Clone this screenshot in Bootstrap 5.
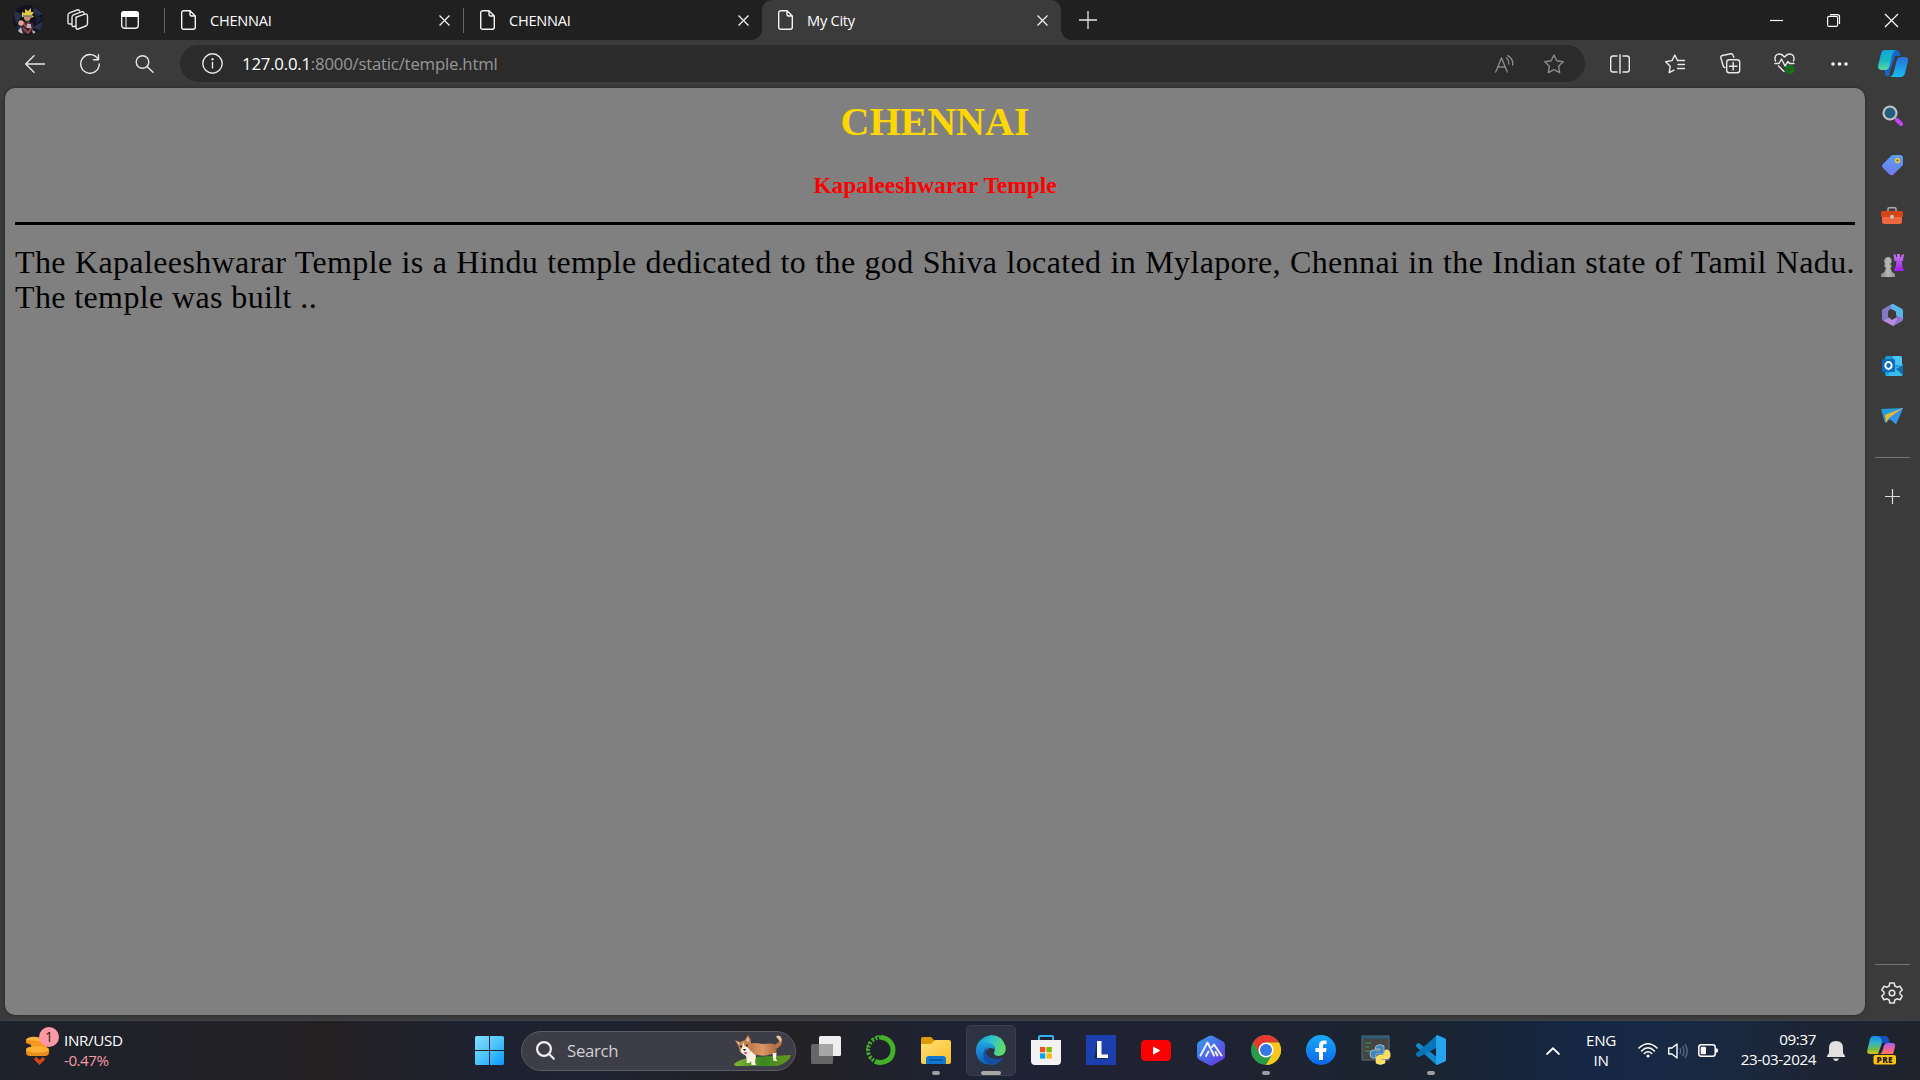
<!DOCTYPE html>
<html lang="en">
<head>
<meta charset="utf-8">
<title>My City</title>
<link rel="stylesheet" href="https://cdn.jsdelivr.net/npm/bootstrap@5.3.0/dist/css/bootstrap.min.css">
<style>
body{width:1920px;height:1080px;overflow:hidden;background:#3b3b3b;color:#fff;font-family:"Open Sans","Noto Sans",sans-serif;font-size:15px;line-height:20px}
svg{display:block;flex:none;overflow:visible}
.ln{fill:none;stroke:#e8e8e8;stroke-width:1.4;stroke-linecap:round;stroke-linejoin:round}
.cell{display:flex;align-items:center;justify-content:center;flex:none}
.tabstrip{height:40px;background:#202020}
.w44{width:44px}.w55{width:55px}.w56{width:56px}.w60{width:60px}.w57{width:57.5px}
.vsep{width:1px;height:25px;background:#666;margin-left:4px}
.tabitem{width:298px;height:40px;padding:0 13px 0 16px;position:relative}
.tabitem span{font-size:14.6px;letter-spacing:-.25px;margin-left:14px}
.tabitem.active{width:299px;background:#3b3b3b;border-radius:10px 10px 0 0}
.tabitem.active::before,.tabitem.active::after{content:"";position:absolute;bottom:0;width:10px;height:10px}
.tabitem.active::before{left:-10px;background:radial-gradient(circle at 0 0,transparent 9.5px,#3b3b3b 10px)}
.tabitem.active::after{right:-10px;background:radial-gradient(circle at 100% 0,transparent 9.5px,#3b3b3b 10px)}
.toolbar{height:48px;padding-left:7px}
.address{width:1405px;height:37px;background:#2b2b2b;border-radius:19px;margin:0 7px 1px 8px;padding-left:22px;padding-right:6px}
.url{font-size:16.8px;margin-left:19px;color:#979797;letter-spacing:-.22px}
.url b{font-weight:400;color:#fff}
.bar-icons{margin-bottom:1px}
.page-view{width:1860px;height:927px;margin-left:5px;background:#808080;border-radius:10px;padding:11px 10px;color:#000;box-shadow:0 0 3px #222}
.page-view h1{font:700 40px/46px "Liberation Serif",serif;color:gold;text-align:center;margin:0 0 26px}
.page-view h3{font:700 23.4px/28px "Liberation Serif",serif;color:red;text-align:center;margin:0}
.page-view hr{height:3px;background:#000;border:0;opacity:1;margin:23px 0 20px}
.page-view p{font:400 32px/35px "Liberation Serif",serif;text-align:justify;letter-spacing:.38px;margin:0}
.rail{width:54px;height:932px;padding-top:2px}
.rail .cell{width:54px;height:50.1px}
.rail .rule{width:35px;height:1px;background:#737373;flex:none}
.taskbar{height:60px;background:linear-gradient(90deg,#1e222c 0,#222124 14%,#232022 17%,#1e2230 25%,#1f2230 32%,#232123 41%,#1d2235 51%,#202231 60%,#1b2430 74%,#152744 82%,#182944 88%,#1d2433 95%,#20232c);border-top:1px solid #3d424a}
.widget{width:475px;padding-left:26px}
.widget .small-pink{color:#f29aa4;letter-spacing:-.5px}
.widget .txt{font-size:15.2px;letter-spacing:-.35px;margin-left:15px;margin-bottom:2px}
.pos-icon{position:relative;width:23px;height:32px}
.notif{position:absolute;left:13px;top:-8px;width:20px;height:20px;border-radius:50%;background:#ff98a4;color:#222;text-align:center;font-size:14px}
.searchbox{width:275px;height:40px;border:1px solid #5b5b64;border-radius:20px;background:#3d3d47;margin:0 2.5px 0 17px;padding-left:14px;padding-right:4px}
.searchbox span{font-size:16.8px;color:#d0d0d2;letter-spacing:-.3px;margin-left:12px}
.app{width:55px;height:59px;position:relative}
.app.run::after{content:"";position:absolute;bottom:5px;width:8px;height:4px;border-radius:2px;background:#9b9da3}
.app.open::before{content:"";position:absolute;left:2.5px;top:4px;width:50px;height:51px;border-radius:5px;background:#2e3344;border:1px solid #3b4050}
.app.open::after{width:20px;background:#aaa8a6}
.app svg{position:relative;margin-bottom:1px}
.tray{font-size:15.2px;letter-spacing:-.35px}
.clock{width:95px;text-align:right;font-size:15.2px;letter-spacing:-.4px;margin:0 0 3px -11px}
</style>
<script src="https://cdn.jsdelivr.net/npm/bootstrap@5.3.0/dist/js/bootstrap.bundle.min.js"></script>
</head>
<body class="d-flex flex-column">
<svg width="0" height="0" class="position-absolute">
<defs>
<symbol id="file" viewBox="0 0 15 20"><path d="M3 .7H9L14.3 6V17.3Q14.3 19.3 12.3 19.3H2.7Q.7 19.3.7 17.3V2.7Q.7.7 3 .7ZM9 .7V4.5Q9 6 10.5 6H14.3" fill="none" stroke="#f4f4f4" stroke-width="1.4"/></symbol>
<symbol id="x" viewBox="0 0 11 11"><path d="M.5.5 10.5 10.5M10.5.5.5 10.5" stroke="#f2f2f2" stroke-width="1.3"/></symbol>
<linearGradient id="gTeal" x2="0" y2="1"><stop stop-color="#10a7d8"/><stop offset=".5" stop-color="#15b5c3"/><stop offset="1" stop-color="#61d7a0"/></linearGradient>
<linearGradient id="gBlue" x2="0" y2="1"><stop stop-color="#2772dd"/><stop offset="1" stop-color="#13bdf3"/></linearGradient>
<linearGradient id="gWin" x2="1" y2="1"><stop stop-color="#83dcff"/><stop offset=".5" stop-color="#4cc6fd"/><stop offset="1" stop-color="#0a97fb"/></linearGradient>
<linearGradient id="gTag" x2="0" y2="1"><stop stop-color="#559ef5"/><stop offset="1" stop-color="#7278ed"/></linearGradient>
<linearGradient id="gPurple" x2="0" y2="1"><stop stop-color="#c07be2"/><stop offset="1" stop-color="#a31cff"/></linearGradient>
<linearGradient id="gGray" x2="1"><stop stop-color="#858585"/><stop offset=".5" stop-color="#b8b8b8"/><stop offset="1" stop-color="#929292"/></linearGradient>
<linearGradient id="gFold" x2="1" y2="1"><stop stop-color="#ffe07b"/><stop offset="1" stop-color="#f9bd26"/></linearGradient>
<linearGradient id="gEdge" x1="0" y1=".3" x2="1" y2=".5"><stop stop-color="#1799d6"/><stop offset=".5" stop-color="#31c2cd"/><stop offset="1" stop-color="#62df5c"/></linearGradient>
<linearGradient id="gEdge2" x2="0" y2="1"><stop stop-color="#21a3df"/><stop offset="1" stop-color="#0a61be"/></linearGradient>
<linearGradient id="gHex" x2="1" y2="1"><stop stop-color="#32a1ed"/><stop offset=".5" stop-color="#4c6ae8"/><stop offset="1" stop-color="#6c2be5"/></linearGradient>
<linearGradient id="gFb" x2="0" y2="1"><stop stop-color="#18a9fb"/><stop offset="1" stop-color="#0967e8"/></linearGradient>
<linearGradient id="gRain" x2="0" y2="1"><stop stop-color="#168bee"/><stop offset=".4" stop-color="#30b3c2"/><stop offset=".75" stop-color="#75bb49"/><stop offset="1" stop-color="#dfc20a"/></linearGradient>
<linearGradient id="gPink" x2="0" y2="1"><stop stop-color="#9e61ec"/><stop offset=".5" stop-color="#ec5fa8"/><stop offset="1" stop-color="#fc7a50"/></linearGradient>
<linearGradient id="gGrass" x2="1"><stop stop-color="#7eb935"/><stop offset=".5" stop-color="#3b861f"/><stop offset="1" stop-color="#669820"/></linearGradient>
<linearGradient id="gFur" x2="1"><stop stop-color="#b87544"/><stop offset=".5" stop-color="#db9968"/><stop offset="1" stop-color="#aa683c"/></linearGradient>
<clipPath id="round"><circle cx="15" cy="15" r="15"/></clipPath>
</defs>
</svg>

<header class="tabstrip d-flex align-items-center flex-shrink-0">
  <div class="cell w56"><svg width="30" height="30"><g clip-path="url(#round)"><rect width="30" height="30" fill="#10131d"/><path d="M0 5 10 10 3 18ZM20 1 30 9 22 12ZM20 22 30 16V27Z" fill="#29324c"/><path d="M2 22 10 15 8 30H3ZM23 9 29 14 23 19Z" fill="#1b2237"/><path d="M9 12 9 7 12 8 12 4 15 6 18 3 18 7 21 7 19 10 21 12 17 13Z" fill="#e2c83c"/><path d="M11 11H18L17 15 14 17 11 14Z" fill="#c68e6a"/><path d="M10 11H19" stroke="#6f7888" stroke-width="1.6"/><path d="M9 17 14 16 20 18 21 23 17 29 9 28 6 22Z" fill="#32293b"/><path d="M10 17 13 22 16 17M10 23 15 28 19 22" fill="none" stroke="#b4493b" stroke-width="1.5"/><circle cx="8" cy="18" r="2.7" fill="#dda98b"/><path d="M8 22 10 29 4 27ZM14 19H18V23H14ZM19 25 23 27 20 29Z" fill="#b5b7c4"/></g></svg></div>
  <div class="cell w44"><svg width="22" height="22" class="ln"><path d="M9 8.2 18 5.2Q20.5 4.5 20.5 7V14.5Q20.5 16 19 17L11 20Q9 20.8 9 18.5V10Q9 8.8 10 8M9 17 7 17.5Q5 18 5 16V8Q5 6.5 6.5 5.8L15 2.7Q16.5 2.2 17 4.2M5 14.7 3 15Q1 15.4 1 13.3V6Q1 4.5 2.5 3.8L10 1Q12 .3 12.6 2"/></svg></div>
  <div class="cell w60"><svg width="18" height="18"><rect x=".7" y=".7" width="16.6" height="16.6" rx="3" fill="none" stroke="#eee" stroke-width="1.4"/><path d="M0 6V3Q0 0 3 0H15Q18 0 18 3V6Z" fill="#fff"/><path d="M5 6V17" stroke="#ddd" stroke-width="1.2"/></svg></div>
  <div class="vsep"></div>
  <div class="tabitem d-flex align-items-center"><svg width="15" height="20"><use href="#file"/></svg><span>CHENNAI</span><svg class="ms-auto" width="11" height="11"><use href="#x"/></svg></div>
  <div class="vsep ms-0"></div>
  <div class="tabitem d-flex align-items-center"><svg width="15" height="20"><use href="#file"/></svg><span>CHENNAI</span><svg class="ms-auto" width="11" height="11"><use href="#x"/></svg></div>
  <div class="tabitem active d-flex align-items-center"><svg width="15" height="20"><use href="#file"/></svg><span>My City</span><svg class="ms-auto" width="11" height="11"><use href="#x"/></svg></div>
  <div class="cell" style="width:54px"><svg width="18" height="18"><path d="M9 0V18M0 9H18" stroke="#e5e5e5" stroke-width="1.3"/></svg></div>
  <div class="ms-auto d-flex">
    <div class="cell w57"><svg width="13" height="13"><path d="M0 6.5H13" stroke="#fff" stroke-width="1.2"/></svg></div>
    <div class="cell w57"><svg width="13" height="13" fill="none" stroke="#fff" stroke-width="1.2"><rect x=".6" y="2.4" width="10" height="10" rx="1.5"/><path d="M3 .6H10.5Q12.5.6 12.5 2.7V10"/></svg></div>
    <div class="cell w57"><svg width="13" height="13"><path d="M0 0 13 13M13 0 0 13" stroke="#fff" stroke-width="1.2"/></svg></div>
  </div>
</header>

<nav class="toolbar d-flex align-items-center flex-shrink-0">
  <div class="cell w55 bar-icons"><svg width="20" height="18" class="ln"><path d="M19.5 9H.7M9 .7.7 9 9 17.3"/></svg></div>
  <div class="cell w55 bar-icons"><svg width="20" height="20" class="ln"><path d="M18.2 5.5A9.3 9.3 0 1 0 19.3 10M18.5.8V5.7H13.5"/></svg></div>
  <div class="cell w55 bar-icons"><svg width="19" height="18" class="ln"><circle cx="7.5" cy="7" r="6.3"/><path d="M12 11.5 18 17.3"/></svg></div>
  <div class="address d-flex align-items-center">
    <svg width="21" height="21" class="ln"><circle cx="10.5" cy="10.5" r="9.7"/><path d="M10.5 9.5V15"/><circle cx="10.5" cy="6.3" r=".5" fill="#fff"/></svg>
    <span class="url"><b>127.0.0.1</b>:8000/static/temple.html</span>
    <div class="ms-auto d-flex opacity-50">
      <div class="cell" style="width:50px"><svg width="19" height="18" class="ln"><path d="M.7 17 6.5 3 12.3 17M2.8 12H10.2M11.5 3Q14 5 13.8 9M12.5.7Q18.4 3.5 17.7 10"/></svg></div>
      <div class="cell" style="width:50px"><svg width="20" height="20" class="ln"><path d="M10 1 12.8 6.8 19.2 7.7 14.6 12.2 15.7 18.7 10 15.6 4.3 18.7 5.4 12.2.8 7.7 7.2 6.8Z"/></svg></div>
    </div>
  </div>
  <div class="cell w55 bar-icons"><svg width="20" height="20" class="ln"><path d="M7 2H3Q.7 2 .7 4.3V15.7Q.7 18 3 18H7M13 2H17Q19.3 2 19.3 4.3V15.7Q19.3 18 17 18H13M10 .7V19.3"/></svg></div>
  <div class="cell w55 bar-icons"><svg width="20" height="20" class="ln"><path d="M12.5 6.5 9.8 1 7 6.6.7 7.7 5.2 12.2 4.2 18.7 9 16.2M13 6.5H19.5M13 10.5H19.5M12.5 14.5H19.5"/></svg></div>
  <div class="cell w55 bar-icons"><svg width="20" height="21" class="ln"><rect x="6.7" y="6.7" width="13" height="13" rx="2.5"/><path d="M13.2 9.5V17M9.5 13.2H17M13.8 4.3 13 2.2Q12.5.4 10.7.8L2.4 2.5Q.3 3 .9 5L3.2 13Q3.6 14.6 5 14.5"/></svg></div>
  <div class="cell w55 bar-icons"><svg width="21" height="21" class="ln"><path d="M1.5 8Q-.2 3.2 3.4 1.4 7.2-.3 10.5 4 13.8-.3 17.6 1.4 21.2 3.2 19.5 8M1 10.5H5L7.5 6 11 13 14 8.5 15.5 10.5H20M4.5 13 10 18.5"/><circle cx="15.8" cy="16.5" r="4.6" fill="#0e7a14" stroke="none"/><path d="M13.7 16.6 15.2 18 18 15" stroke="#33502e"/></svg></div>
  <div class="cell w55 bar-icons"><svg width="17" height="4" fill="#fff"><circle cx="2" cy="2" r="1.8"/><circle cx="8.5" cy="2" r="1.8"/><circle cx="15" cy="2" r="1.8"/></svg></div>
  <div class="cell bar-icons" style="width:51px"><svg width="30" height="27"><path d="M7 0H18Q21.5 0 22.7 6H17L11.5 23Q12.5 27 8 26 7 25 6.5 20H3Q0 20 .3 16L3 4Q4 0 7 0Z" fill="#1465cc"/><path d="M7 0H18Q15 1 14 6L11.5 16Q10.5 20 7 20H3Q-.5 19 .3 15L3 4Q4 0 7 0Z" fill="url(#gTeal)"/><path d="M23 7H27Q31 7 29.8 12L27 23Q26 27 22.5 27H12Q15 26 16 21L18.5 11Q19.5 7 23 7Z" fill="url(#gBlue)"/></svg></div>
</nav>

<div class="d-flex flex-shrink-0" style="height:932px">
  <main class="page-view flex-shrink-0">
    <h1>CHENNAI</h1>
    <h3>Kapaleeshwarar Temple</h3>
    <hr>
    <p>The Kapaleeshwarar Temple is a Hindu temple dedicated to the god Shiva located in Mylapore, Chennai in the Indian state of Tamil Nadu. The temple was built ..</p>
  </main>
  <aside class="rail d-flex flex-column align-items-center">
    <div class="cell"><svg width="21" height="21"><path d="M13 13 15 15" stroke="#888" stroke-width="2"/><circle cx="8" cy="8" r="6.5" fill="#205d7e" stroke="#c1c1c1" stroke-width="2.2"/><path d="M15 15 19 19" stroke="#c444f4" stroke-width="4" stroke-linecap="round"/></svg></div>
    <div class="cell"><svg width="21" height="21"><path d="M10 0H18Q21 0 21 3V10L11 20Q9 21 7 19L1 13Q-1 11 1 9Z" fill="url(#gTag)"/><circle cx="15.5" cy="5.5" r="1.9" fill="#4a5579" stroke="#f0cd24" stroke-width="1.6"/></svg></div>
    <div class="cell"><svg width="22" height="17"><path d="M7 5V2Q7 .8 8 .8H14Q15 .8 15 2V5" fill="none" stroke="#aaa" stroke-width="1.6"/><path d="M1 8H21V15Q21 17 19 17H3Q1 17 1 15Z" fill="#ed6740"/><path d="M1 4H21Q22 4 22 6V10H0V6Q0 4 1 4Z" fill="#d54617"/><circle cx="11" cy="9.7" r="2" fill="#c6c6c6"/></svg></div>
    <div class="cell"><svg width="23" height="23"><path d="M12.5 0 15 1V3H16V0H19V3H20L20.5 1 23 0 22 7H20.7L21.5 14 23 16V17H13V16L14.7 13 15.5 7H13.5Z" fill="url(#gPurple)"/><path d="M4 10Q2 6 4.5 4 7.5 2 10 4.5 12 8 9 10L11 12 9.5 14 11 18 14 20V23H0V20L3.5 18 5 14 3 12Z" fill="url(#gGray)"/></svg></div>
    <div class="cell"><svg width="21" height="22"><path d="M9 .5 11 0 20 5 21 7V15L14 11V7.5L9 4.5 5 7V14L1 16.5 0 15V6Z" fill="#7fa0e0"/><path d="M11 0 20 5 21 7V15L14 11V7.5L7 3.5Z" fill="#55b6e8"/><path d="M9 .5 0 6V15L1 16.5 6 14V7L9 4.5Z" fill="#8479c7"/><path d="M1 16.5 7 13.5 10 16 15 13V11L21 15 20 17 11 22Z" fill="#b98bd9"/><path d="M14 11 21 15 20 17 12 21 15 15Z" fill="#8d74cf"/></svg></div>
    <div class="cell"><svg width="21" height="20"><rect x="3" width="17" height="20" rx="2" fill="#149bd8"/><path d="M11 0H18Q20 0 20 2V9H11Z" fill="#49c4f4"/><path d="M12 12 21 8V18Q21 20 18 20H4Z" fill="#36bceb"/><path d="M14 13 21 9V19Z" fill="#116eae"/><rect y="3" width="13" height="13" rx="1.5" fill="#086bc0"/><ellipse cx="6.5" cy="9.5" rx="3.2" ry="3.4" fill="none" stroke="#fff" stroke-width="2"/></svg></div>
    <div class="cell"><svg width="22" height="16"><path d="M0 1 22 0 13 8 4 15Z" fill="#249bdc"/><path d="M4 7 22 0 15 16Z" fill="#47a8f8"/><path d="M4 7 22 0 8 10 5 15Z" fill="#f3b826"/><path d="M8 10 22 0 15 16Z" fill="#3491ed"/></svg></div>
    <div class="rule" style="margin-top:16px"></div>
    <div class="cell" style="height:77px"><svg width="15" height="15"><path d="M7.5 0V15M0 7.5H15" stroke="#ddd" stroke-width="1.2"/></svg></div>
    <div class="rule mt-auto"></div>
    <div class="cell" style="height:55px"><svg width="22" height="22" viewBox="0 0 22 22" class="ln" style="stroke-width:1.5"><path d="M8.8 1H13.2L13.8 4 16 5.2 19 4.2 21.2 8 19 10V12L21.2 14 19 17.8 16 16.8 13.8 18 13.2 21H8.8L8.2 18 6 16.8 3 17.8.8 14 3 12V10L.8 8 3 4.2 6 5.2 8.2 4Z"/><circle cx="11" cy="11" r="2.8"/></svg></div>
  </aside>
</div>

<footer class="taskbar d-flex align-items-center flex-shrink-0">
  <div class="widget d-flex align-items-center">
    <div class="pos-icon"><svg width="24" height="32"><ellipse cx="8" cy="5" rx="8" ry="3.3" fill="#ffb638"/><path d="M0 5V8Q5 11 13 10V6Z" fill="#ef9119"/><rect x="5" y="7" width="16" height="8" rx="4" fill="#f49c22"/><rect x="0" y="12" width="23" height="9" rx="4" fill="#ed8d1a"/><ellipse cx="11.5" cy="14.5" rx="11.5" ry="3.2" fill="#ffb034"/><path d="M9 23 13.5 27.5 18 23" fill="none" stroke="#d34716" stroke-width="3.5"/></svg><span class="notif">1</span></div>
    <div class="txt"><div>INR/USD</div><div class="small-pink">-0.47%</div></div>
  </div>
  <svg width="29" height="29"><path d="M0 1.5Q0 0 1.5 0H14V14H0ZM15 0H27.5Q29 0 29 1.5V14H15ZM0 15H14V29H1.5Q0 29 0 27.5ZM15 15H29V27.5Q29 29 27.5 29H15Z" fill="url(#gWin)"/></svg>
  <div class="searchbox d-flex align-items-center mb-1px">
    <svg width="19" height="19" fill="none" stroke="#eee" stroke-width="2.2" stroke-linecap="round"><circle cx="8" cy="8" r="6.9"/><path d="M13.3 13.3 17.8 17.8"/></svg>
    <span>Search</span>
    <svg class="ms-auto" width="57" height="32"><path d="M0 29Q5 24 20 22L57 20Q56 27 43 31H4Q0 31 0 29Z" fill="url(#gGrass)"/><path d="M38 10Q46 9 45 4L48 4Q49 11 42 14L39 15Z" fill="#b97548"/><path d="M42 1.5Q46-1 47.5 3.5L47 7 44 4Z" fill="#e7c5a4"/><path d="M14 9Q20 7 28 9L38 8.5Q43 10 42.5 18L41 21 38 19Q30 22 21 19.5L15 20Z" fill="url(#gFur)"/><path d="M10 19 16 15 20 19 22 20 21 27 22 30H17.5L17 26 15.5 28H12.5Q13 24 12 21ZM38.5 18H42.5L42 24 43.5 26H39.5Z" fill="#fff0e1"/><path d="M1 5 6 7 11 5 14 0 16.5 4 17.5 11 16 17 11 20 6 17 4.5 11Z" fill="#c2804f"/><path d="M2.3 6.3 5.5 8 4.7 10ZM12 5.5 14 2 15.5 7Z" fill="#efc0ad"/><path d="M9 6.5 10.5 11Q16 13 16 16.5L12 20.5 8 18.5 6.5 15.5 8.5 12Z" fill="#fff4e8"/><circle cx="7" cy="11.5" r="1" fill="#301c17"/><circle cx="13" cy="10.5" r="1" fill="#301c17"/><path d="M8.7 14H12.3L10.7 16Z" fill="#27201f"/><path d="M10 17H13V18.7Q11.5 20.5 10 18Z" fill="#ec5f74"/></svg>
  </div>
  <div class="cell app"><svg width="30" height="28"><rect x="8" width="22" height="20" rx="1.5" fill="#eee"/><rect y="8" width="22" height="20" rx="1.5" fill="#666"/><path d="M8 8H22V20H8Z" fill="#a6a6a6"/></svg></div>
  <div class="cell app"><svg width="30" height="30" fill="none"><path d="M15 2.5A12.5 12.5 0 1 1 9 26.2" stroke="#43b02a" stroke-width="5"/><path d="M15 2.5A12.5 12.5 0 0 0 9 26.2" stroke="#43b02a" stroke-width="4" stroke-dasharray="2 1.8"/><path d="M13 1A14 14 0 0 0 5 24.5" stroke="#43b02a" stroke-width="1.5" stroke-dasharray="3 2.5"/></svg></div>
  <div class="cell app run"><svg width="30" height="27"><path d="M0 2Q0 0 2 0H10L14 4V9H0Z" fill="#dc9b07"/><path d="M0 7H10L14 3H28Q30 3 30 5V25Q30 27 28 27H2Q0 27 0 25Z" fill="url(#gFold)"/><path d="M5 27V22Q5 19 8 19H22Q25 19 25 22V27Z" fill="#0c78ce"/><path d="M9 23H21" stroke="#075096" stroke-width="1.5" stroke-linecap="round"/></svg></div>
  <div class="cell app open run"><svg width="30" height="30"><path d="M15 0Q26 0 29.5 11 31 20 23 21 18 21 18 18 21 12 15 9 7 7 0 15 1 3 15 0Z" fill="url(#gEdge)"/><path d="M0 15Q2 7 10 7 18 8 19 15 14 10 10 16 8 23 15 29 3 31 0 18Z" fill="url(#gEdge2)"/><path d="M12 12Q8 16 11 20 16 26 27 23 20 33 12 29 4 23 9 14Z" fill="#1550a0"/></svg></div>
  <div class="cell app"><svg width="30" height="30"><path d="M8 7V2Q8 1 9 1H21Q22 1 22 2V7" fill="none" stroke="#29b6ef" stroke-width="2"/><path d="M0 5H30V26Q30 30 26 30H4Q0 30 0 26Z" fill="#f2f2f2"/><path d="M9 12H14.3V17.3H9Z" fill="#f25022"/><path d="M15.5 12H20.8V17.3H15.5Z" fill="#7fba00"/><path d="M9 18.3H14.3V23.6H9Z" fill="#00a4ef"/><path d="M15.5 18.3H20.8V23.6H15.5Z" fill="#ffb900"/></svg></div>
  <div class="cell app"><svg width="30" height="30"><rect width="30" height="30" fill="#1d3eaf"/><path d="M11 6 8 24H20L22 20H13Z" fill="#102b5b"/><path d="M11 6H15.5V19.5H22V23H11Z" fill="#fff"/></svg></div>
  <div class="cell app"><svg width="30" height="21"><rect width="30" height="21" rx="4.5" fill="#f00"/><path d="M12 6.5 19.5 10.5 12 14.8Z" fill="#fff"/></svg></div>
  <div class="cell app"><svg width="28" height="31"><path d="M12 1Q14 0 16 1L26 6.5Q28 8 28 10V21Q28 23 26 24.5L16 30Q14 31 12 30L2 24.5Q0 23 0 21V10Q0 8 2 6.5Z" fill="url(#gHex)"/><path d="M3.5 20.5 10.5 7.5 17 20.5M9 21 11.5 16.5M15 12 17 9.5 24.5 20.5M20.5 20.5 18.5 17" fill="none" stroke="#edf1ff" stroke-width="2" stroke-linejoin="round" stroke-linecap="round"/></svg></div>
  <div class="cell app run"><svg width="30" height="30"><circle cx="15" cy="15" r="15" fill="#299c49"/><path d="M2 7.5A15 15 0 0 1 28 7.5H15L8.5 18.8Z" fill="#e33b2e"/><path d="M28 7.5A15 15 0 0 1 15 30L21.5 18.8 15 7.5Z" fill="#fcc61b"/><circle cx="15" cy="15" r="7.6" fill="#fff"/><circle cx="15" cy="15" r="6" fill="#3478e6"/></svg></div>
  <div class="cell app"><svg width="30" height="30"><circle cx="15" cy="15" r="15" fill="url(#gFb)"/><path d="M13 25V17H9.5V13H13V10.5Q13 5.5 18 5.5H20.5V9H18.5Q17 9 17 11V13H20.5L20 17H17V25Z" fill="#fff"/></svg></div>
  <div class="cell app"><svg width="30" height="30"><rect x="1" y="1" width="27" height="24" fill="#444544" stroke="#5b6f79"/><path d="M1 2.5H28" stroke="#27607e" stroke-width="2"/><path d="M4 8H10M4 12H8M4 16H11" stroke="#3e8044" stroke-width="1.3"/><path d="M15 11Q19 8 23 11V19H15V23H12Q9 23 9 19 9 15 12 15H19V14H14Z" fill="#4186b9" stroke="#dae6ec" stroke-width=".6"/><path d="M24 15H27Q30 17 29 22 28 24 26 24H20V25H24V28Q19 31 15 28V23Q16 20 19 20H22Q24 19 24 15Z" fill="#ffdd55" stroke="#f5edc2" stroke-width=".6"/></svg></div>
  <div class="cell app run"><svg width="30" height="30"><path d="M3 8 22 23V29L20.5 30 0 11.5V10L2 8Z" fill="#1487cd"/><path d="M21 0 30 4V8L3 22H2L0 20V18.5Z" fill="#0874b9"/><path d="M21 0 29 3.5Q30 4 30 5V25Q30 26 29 26.5L21 30Q20 30 20 28V2Z" fill="#26a4ef"/></svg></div>
  <div class="ms-auto d-flex align-items-center tray">
    <div class="cell" style="width:51px"><svg width="14" height="8"><path d="M1 7 7 1.3 13 7" fill="none" stroke="#fff" stroke-width="1.8" stroke-linecap="round"/></svg></div>
    <div class="text-center" style="width:46px;margin-bottom:2px">ENG<br>IN</div>
    <div class="cell" style="width:48px"><svg width="20" height="15" fill="none" stroke="#fff" stroke-width="1.6" stroke-linecap="round"><path d="M1 5Q10-3.5 19 5M3.6 8Q10 1.5 16.4 8M6.3 10.5Q10 7 13.7 10.5"/><circle cx="10" cy="13" r="1.5" fill="#fff" stroke="none"/></svg></div>
    <div class="cell" style="width:12px"><svg width="20" height="16" fill="none" stroke="#fff" stroke-width="1.4" stroke-linejoin="round"><path d="M.7 5H4L9 1V15L4 11H.7Z"/><path d="M12 5Q13.5 8 12 11M14.5 3Q17.5 8 14.5 13M17 1.3Q21.5 8 17 14.7" stroke="#5b6679"/></svg></div>
    <div class="cell" style="width:48px"><svg width="20" height="13"><rect x=".8" y=".8" width="16.4" height="11.4" rx="2.5" fill="none" stroke="#fff" stroke-width="1.5"/><rect x="2.7" y="2.7" width="5.3" height="7.6" rx="1" fill="#fff"/><path d="M18 4.5H19Q20 4.5 20 6.5T19 8.5H18Z" fill="#fff"/></svg></div>
    <div class="clock">09:37<br>23-03-2024</div>
    <div class="cell" style="width:40px"><svg width="18" height="20"><path d="M9 0Q16 0 16 7V12L18 15V16H0V15L2 12V7Q2 0 9 0ZM6 17.5H12Q11 20 9 20T6 17.5Z" fill="#e2e1df"/></svg></div>
    <div class="cell" style="width:50px;margin-right:14px"><svg width="29" height="29" viewBox="0 0 29 29"><path d="M6 0H18Q21 0 22.5 7H15L11 18H3Q-.5 18 .3 14L3 3Q4 0 6 0Z" fill="url(#gRain)"/><path d="M14 0H18Q21 0 22.5 7H15Q15 2 11 0Z" fill="#164ec4"/><path d="M20 7H25Q29 7 28 11L26 18H12Q15 18 16 13Q17 7 20 7Z" fill="url(#gPink)"/><rect x="6.5" y="19" width="22.5" height="9.5" rx="2" fill="#ffc20a"/><text x="17.8" y="26.7" text-anchor="middle" font-family="Open Sans" font-size="8.2" font-weight="800" letter-spacing=".4" fill="#231a0a">PRE</text></svg></div>
  </div>
</footer>
</body>
</html>
